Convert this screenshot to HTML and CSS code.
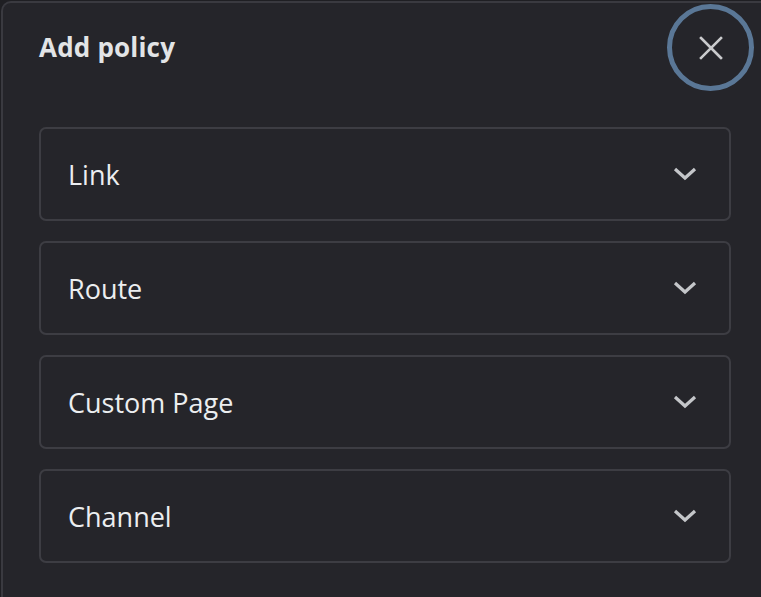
FILE: index.html
```html
<!DOCTYPE html>
<html lang="en">
<head>
<meta charset="utf-8">
<title>Add policy</title>
<link rel="stylesheet" href="styles.css">
</head>
<body>
<div class="modal">
  <header class="modal-header">
    <h2 class="modal-title">Add policy</h2>
    <button class="close-btn" aria-label="Close">
      <svg width="26" height="26" viewBox="0 0 26 26"><path d="M3 3 L23 23 M23 3 L3 23" stroke="#c9cacc" stroke-width="2.6" stroke-linecap="square" fill="none"/></svg>
    </button>
  </header>
  <div class="sections">
    <div class="section"><span class="section-label">Link</span><svg class="chev" width="24" height="14" viewBox="0 0 24 14"><path d="M2 2 L12 11 L22 2" stroke="#c4c6c9" stroke-width="3.2" fill="none"/></svg></div>
    <div class="section"><span class="section-label">Route</span><svg class="chev" width="24" height="14" viewBox="0 0 24 14"><path d="M2 2 L12 11 L22 2" stroke="#c4c6c9" stroke-width="3.2" fill="none"/></svg></div>
    <div class="section"><span class="section-label">Custom Page</span><svg class="chev" width="24" height="14" viewBox="0 0 24 14"><path d="M2 2 L12 11 L22 2" stroke="#c4c6c9" stroke-width="3.2" fill="none"/></svg></div>
    <div class="section"><span class="section-label">Channel</span><svg class="chev" width="24" height="14" viewBox="0 0 24 14"><path d="M2 2 L12 11 L22 2" stroke="#c4c6c9" stroke-width="3.2" fill="none"/></svg></div>
  </div>
</div>
</body>
</html>
```
FILE: styles.css
```css
html, body {
  margin: 0;
  padding: 0;
  background: #1f1f23;
  overflow: hidden;
  height: 597px;
}
body {
  padding: 1px 0 0 1px;
  box-sizing: border-box;
  font-family: "Open Sans", "Noto Sans", sans-serif;
  color: #e8eaed;
}
.modal {
  width: 760px;
  height: 596px;
  box-sizing: border-box;
  background: #25252a;
  border: 2px solid #3a3a40;
  border-right: none;
  border-bottom: none;
  border-radius: 10px 0 0 0;
  padding: 0 0 0 36px;
  overflow: hidden;
}
.modal-header {
  display: flex;
  align-items: center;
  justify-content: space-between;
  width: 693px;
  height: 91px;
  margin-top: -2px;
}
.modal-title {
  margin: 0;
  font-size: 26px;
  font-weight: 700;
  color: #e2e4e6;
  letter-spacing: 0.2px;
}
.close-btn {
  flex: none;
  width: 87px;
  height: 87px;
  box-sizing: border-box;
  border: 5px solid #5a7796;
  border-radius: 50%;
  background: transparent;
  display: flex;
  align-items: center;
  justify-content: center;
  padding: 0;
  margin-right: -22px;
  margin-top: 2px;
}
.close-btn svg { display: block; }
.sections {
  display: flex;
  flex-direction: column;
  gap: 20px;
  margin-top: 35px;
  width: 692px;
}
.section {
  height: 94px;
  box-sizing: border-box;
  border: 2px solid #3d3d43;
  border-radius: 7px;
  display: flex;
  align-items: center;
  justify-content: space-between;
  padding: 0 32px 0 27px;
}
.section-label {
  font-size: 27px;
  color: #eceef0;
}
.chev { display: block; margin-top: -1px; }
```
